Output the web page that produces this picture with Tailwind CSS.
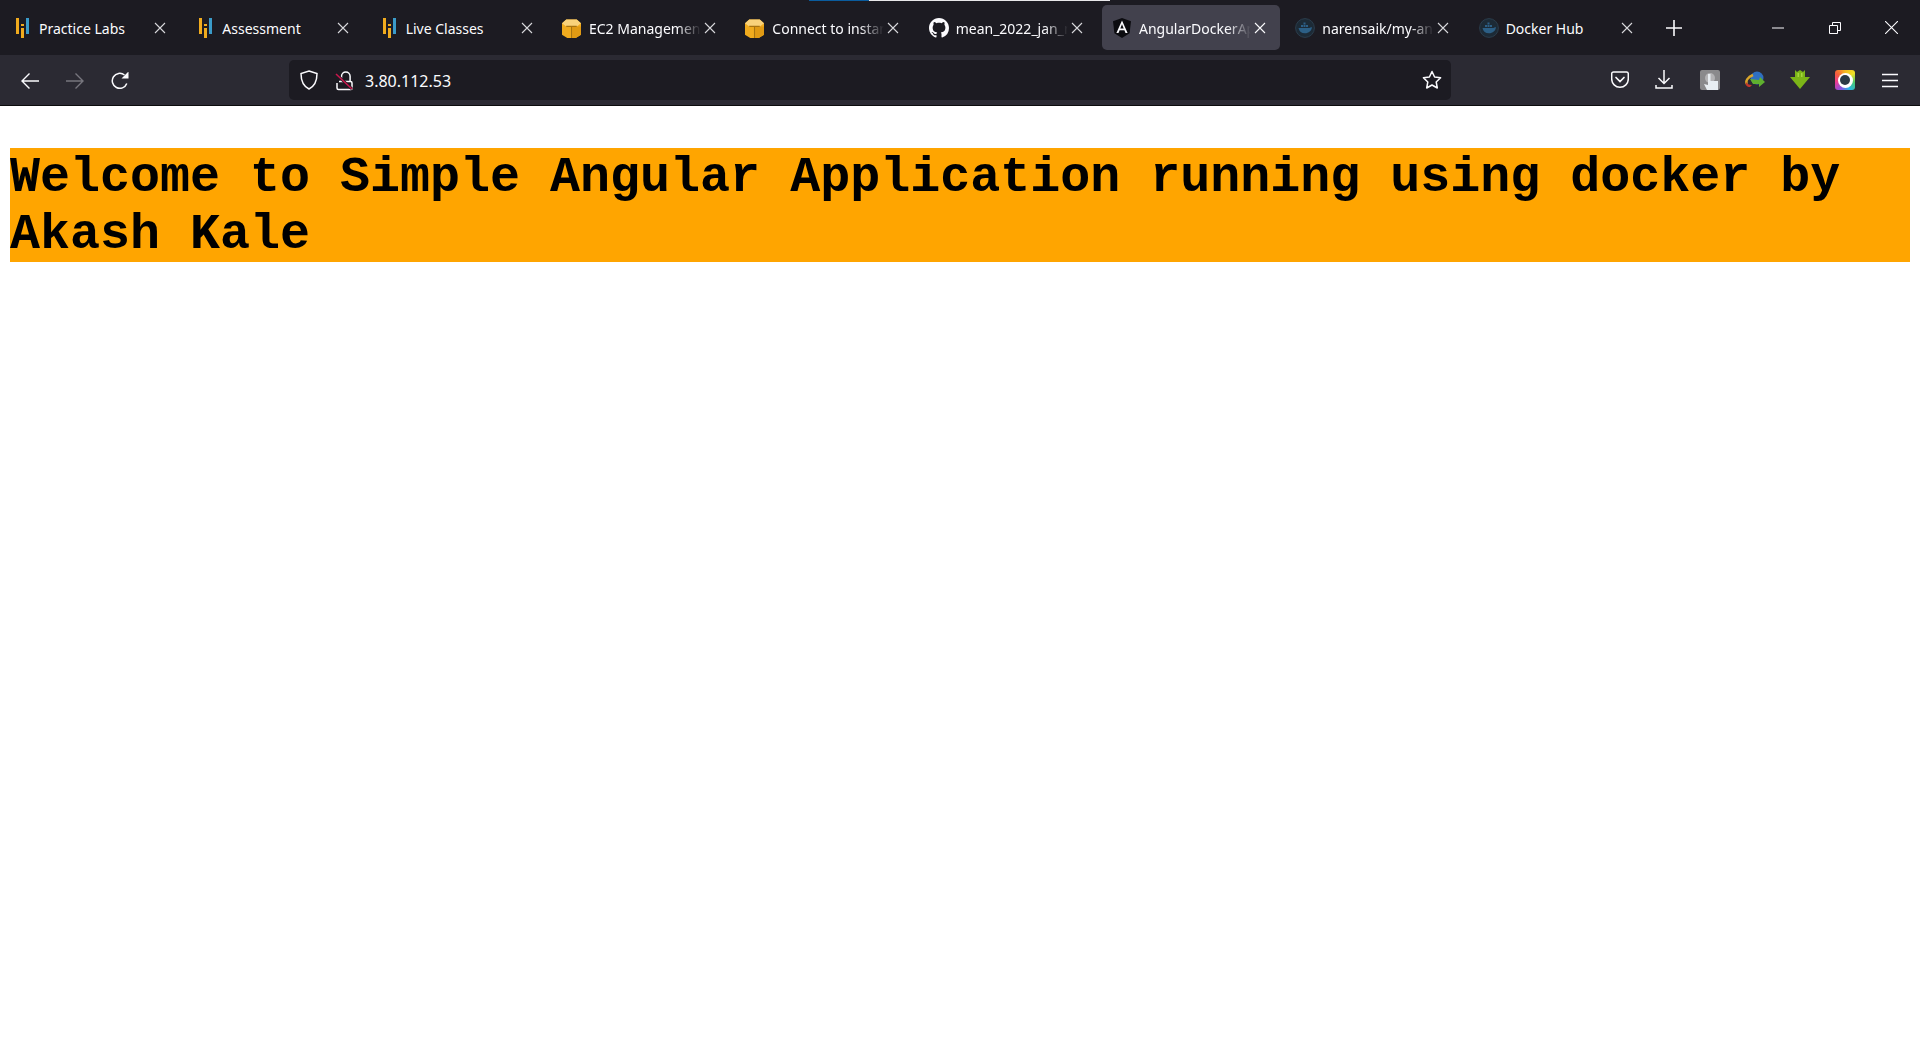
<!DOCTYPE html>
<html lang="en">
<head>
  <meta charset="UTF-8" />
  <title>AngularDockerApp</title>
  <script src="https://cdn.jsdelivr.net/npm/@tailwindcss/browser@4"></script>
</head>
<body class="bg-white font-['Noto_Sans',sans-serif]">
  <!-- Tab strip -->
  <div class="relative flex h-[55px] items-center bg-[#1c1b22] pl-[2px] text-[14px] text-[#fbfbfe]">
    <div class="absolute left-[809px] top-0 h-[1px] w-[60px] bg-[#0a5c9e]"></div>
    <div class="absolute left-[869px] top-0 h-[1px] w-[241px] bg-[#e8e8ea]"></div>

    <div class="mr-[5.33px] flex h-[45px] w-[178px] shrink-0 items-center rounded">
      <svg class="ml-[14px] mt-[1px] h-[20px] w-[13px]" viewBox="0 0 13 20"><path fill="#f0ab1e" d="M0 0h3v16H0zM5 6h3v2H5zM5 10h3v10H5z"/><path fill="#3a9bc9" d="M10 0h3v16h-3z"/></svg>
      <span class="ml-[10px] mt-[2px] w-[112px] truncate">Practice Labs</span>
      <svg class="ml-[3px] h-[12px] w-[12px]" viewBox="0 0 12 12"><path stroke="#d8d8dc" stroke-width="1.1" d="M1 1l10 10M11 1L1 11"/></svg>
    </div>
    <div class="mr-[5.33px] flex h-[45px] w-[178px] shrink-0 items-center rounded">
      <svg class="ml-[14px] mt-[1px] h-[20px] w-[13px]" viewBox="0 0 13 20"><path fill="#f0ab1e" d="M0 0h3v16H0zM5 6h3v2H5zM5 10h3v10H5z"/><path fill="#3a9bc9" d="M10 0h3v16h-3z"/></svg>
      <span class="ml-[10px] mt-[2px] w-[112px] truncate">Assessment</span>
      <svg class="ml-[3px] h-[12px] w-[12px]" viewBox="0 0 12 12"><path stroke="#d8d8dc" stroke-width="1.1" d="M1 1l10 10M11 1L1 11"/></svg>
    </div>
    <div class="mr-[5.33px] flex h-[45px] w-[178px] shrink-0 items-center rounded">
      <svg class="ml-[14px] mt-[1px] h-[20px] w-[13px]" viewBox="0 0 13 20"><path fill="#f0ab1e" d="M0 0h3v16H0zM5 6h3v2H5zM5 10h3v10H5z"/><path fill="#3a9bc9" d="M10 0h3v16h-3z"/></svg>
      <span class="ml-[10px] mt-[2px] w-[112px] truncate">Live Classes</span>
      <svg class="ml-[3px] h-[12px] w-[12px]" viewBox="0 0 12 12"><path stroke="#d8d8dc" stroke-width="1.1" d="M1 1l10 10M11 1L1 11"/></svg>
    </div>
    <div class="mr-[5.33px] flex h-[45px] w-[178px] shrink-0 items-center rounded">
      <svg class="ml-[10px] mt-[1px] h-[19px] w-[19px]" viewBox="0 0 18 18"><path fill="#f0ab1e" d="M0 4l4-3.500h10L18 4v11l-5 3H5l-5-3z"/><path fill="#e09a14" d="M9 7h9v8l-5 3H9z"/><path fill="#f9d27a" d="M0 4l4-3.500h10L18 4l-4 3H4z"/><path fill="#a87410" d="M8.500 7h1v11h-1zM4 6.500h10v1H4z"/></svg>
      <span class="ml-[8px] mt-[2px] w-[112px] overflow-hidden whitespace-nowrap [mask-image:linear-gradient(to_left,transparent,black_24px)]">EC2 Management</span>
      <svg class="ml-[3px] h-[12px] w-[12px]" viewBox="0 0 12 12"><path stroke="#d8d8dc" stroke-width="1.1" d="M1 1l10 10M11 1L1 11"/></svg>
    </div>
    <div class="mr-[5.33px] flex h-[45px] w-[178px] shrink-0 items-center rounded">
      <svg class="ml-[10px] mt-[1px] h-[19px] w-[19px]" viewBox="0 0 18 18"><path fill="#f0ab1e" d="M0 4l4-3.500h10L18 4v11l-5 3H5l-5-3z"/><path fill="#e09a14" d="M9 7h9v8l-5 3H9z"/><path fill="#f9d27a" d="M0 4l4-3.500h10L18 4l-4 3H4z"/><path fill="#a87410" d="M8.500 7h1v11h-1zM4 6.500h10v1H4z"/></svg>
      <span class="ml-[8px] mt-[2px] w-[112px] overflow-hidden whitespace-nowrap [mask-image:linear-gradient(to_left,transparent,black_24px)]">Connect to instance</span>
      <svg class="ml-[3px] h-[12px] w-[12px]" viewBox="0 0 12 12"><path stroke="#d8d8dc" stroke-width="1.1" d="M1 1l10 10M11 1L1 11"/></svg>
    </div>
    <div class="mr-[5.33px] flex h-[45px] w-[178px] shrink-0 items-center rounded">
      <svg class="ml-[10px] mt-[1px] h-[20px] w-[20px]" viewBox="0 0 16 16"><path fill="#fbfbfe" d="M8 0C3.58 0 0 3.58 0 8c0 3.54 2.29 6.53 5.47 7.59.4.07.55-.17.55-.38 0-.19-.01-.82-.01-1.49-2.01.37-2.53-.49-2.69-.94-.09-.23-.48-.94-.82-1.13-.28-.15-.68-.52-.01-.53.63-.01 1.08.58 1.23.82.72 1.21 1.87.87 2.33.66.07-.52.28-.87.51-1.07-1.78-.2-3.64-.89-3.64-3.95 0-.87.31-1.59.82-2.15-.08-.2-.36-1.02.08-2.12 0 0 .67-.21 2.2.82.64-.18 1.32-.27 2-.27s1.36.09 2 .27c1.53-1.04 2.2-.82 2.2-.82.44 1.1.16 1.92.08 2.12.51.56.82 1.27.82 2.15 0 3.07-1.87 3.75-3.65 3.95.29.25.54.73.54 1.48 0 1.07-.01 1.93-.01 2.2 0 .21.15.46.55.38A8.01 8.01 0 0 0 16 8c0-4.42-3.58-8-8-8z"/></svg>
      <span class="ml-[7px] mt-[2px] w-[112px] overflow-hidden whitespace-nowrap [mask-image:linear-gradient(to_left,transparent,black_24px)]">mean_2022_jan_nodejs</span>
      <svg class="ml-[3px] h-[12px] w-[12px]" viewBox="0 0 12 12"><path stroke="#d8d8dc" stroke-width="1.1" d="M1 1l10 10M11 1L1 11"/></svg>
    </div>
    <div class="mr-[5.33px] flex h-[45px] w-[178px] shrink-0 items-center rounded-[5px] bg-[#42414d]">
      <svg class="ml-[10px] mt-[1px] h-[20px] w-[20px]" viewBox="0 0 20 20"><path fill="#0c0c10" d="M10 0l9 3.200-1.400 12L10 20l-7.600-4.800L1 3.200z"/><path fill="#fbfbfe" d="M10 2.400L4.400 15h2.100l1.100-2.800h4.800l1.100 2.800h2.100zM8.300 10.400L10 6.200l1.700 4.200z"/></svg>
      <span class="ml-[7px] mt-[2px] w-[112px] overflow-hidden whitespace-nowrap [mask-image:linear-gradient(to_left,transparent,black_24px)]">AngularDockerApp</span>
      <svg class="ml-[3px] h-[12px] w-[12px]" viewBox="0 0 12 12"><path stroke="#fbfbfe" stroke-width="1.1" d="M1 1l10 10M11 1L1 11"/></svg>
    </div>
    <div class="mr-[5.33px] flex h-[45px] w-[178px] shrink-0 items-center rounded">
      <svg class="ml-[10px] mt-[1px] h-[20px] w-[20px]" viewBox="0 0 20 20"><circle cx="10" cy="10" r="9.400" fill="#1c2a36" stroke="#2b3d4c" stroke-width="1"/><path fill="#2c5f86" d="M3.500 10h11c.8-.9 1.800-1 2.500-.7-.5 3.600-3.200 6-7 6-3.600 0-5.800-2-6.500-5.300zM6 7h2v2H6zM8.500 7h2v2h-2zM11 7h2v2h-2zM8.500 4.500h2v2h-2z"/></svg>
      <span class="ml-[7px] mt-[2px] w-[112px] overflow-hidden whitespace-nowrap [mask-image:linear-gradient(to_left,transparent,black_24px)]">narensaik/my-angular</span>
      <svg class="ml-[3px] h-[12px] w-[12px]" viewBox="0 0 12 12"><path stroke="#d8d8dc" stroke-width="1.1" d="M1 1l10 10M11 1L1 11"/></svg>
    </div>
    <div class="mr-[5.33px] flex h-[45px] w-[178px] shrink-0 items-center rounded">
      <svg class="ml-[10px] mt-[1px] h-[20px] w-[20px]" viewBox="0 0 20 20"><circle cx="10" cy="10" r="9.400" fill="#1c2a36" stroke="#2b3d4c" stroke-width="1"/><path fill="#2c5f86" d="M3.500 10h11c.8-.9 1.800-1 2.500-.7-.5 3.600-3.200 6-7 6-3.600 0-5.800-2-6.500-5.300zM6 7h2v2H6zM8.500 7h2v2h-2zM11 7h2v2h-2zM8.500 4.500h2v2h-2z"/></svg>
      <span class="ml-[7px] mt-[2px] w-[112px] truncate">Docker Hub</span>
      <svg class="ml-[3px] h-[12px] w-[12px]" viewBox="0 0 12 12"><path stroke="#d8d8dc" stroke-width="1.1" d="M1 1l10 10M11 1L1 11"/></svg>
    </div>

    <svg class="ml-[14px] h-[16px] w-[16px]" viewBox="0 0 16 16"><path stroke="#fbfbfe" stroke-width="1.600" d="M8 0v16M0 8h16"/></svg>

    <div class="ml-auto flex items-center">
      <div class="flex w-[59px] justify-center"><svg class="h-[12px] w-[12px]" viewBox="0 0 12 12"><path stroke="#fbfbfe" d="M0 6h12"/></svg></div>
      <div class="flex w-[55px] justify-center"><svg class="h-[12px] w-[12px]" viewBox="0 0 12 12"><path fill="none" stroke="#fbfbfe" d="M.5 3.500h8v8h-8zM3.500 3.500v-3h8v8h-3"/></svg></div>
      <div class="flex w-[58px] justify-center"><svg class="h-[13px] w-[13px]" viewBox="0 0 13 13"><path stroke="#fbfbfe" stroke-width="1.100" d="M0 0l13 13M13 0L0 13"/></svg></div>
    </div>
  </div>

  <!-- Nav bar -->
  <div class="flex h-[51px] items-center border-b border-[#0c0c0d] bg-[#2b2a33] text-[#fbfbfe]">
    <svg class="ml-[21px] mt-[2px] h-[18px] w-[18px]" viewBox="0 0 18 18"><path fill="none" stroke="#fbfbfe" stroke-width="1.400" d="M18 9H1M8.500 1.500L1 9l7.500 7.500"/></svg>
    <svg class="ml-[27px] mt-[2px] h-[18px] w-[18px]" viewBox="0 0 18 18"><path fill="none" stroke="#77767e" stroke-width="1.400" d="M0 9h17M9.500 1.500L17 9l-7.500 7.500"/></svg>
    <svg class="ml-[27px] mt-[2px] h-[18px] w-[18px]" viewBox="0 0 18 18"><path fill="none" stroke="#fbfbfe" stroke-width="1.500" d="M15.800 11.500A7.500 7.500 0 1 1 13.500 3"/><path fill="#fbfbfe" d="M10.500 6.500h7v-7z"/></svg>

    <!-- URL bar -->
    <div class="ml-[160px] flex h-[40px] w-[1162px] items-center rounded-[5px] bg-[#1c1b22]">
      <svg class="ml-[11px] h-[20px] w-[18px]" viewBox="0 0 18 20"><path fill="none" stroke="#fbfbfe" stroke-width="1.500" d="M9 1l8 2.500c0 7-2 12.500-8 15.500C3 16 1 10.500 1 3.500z"/></svg>
      <svg class="ml-[17px] mt-[2px] h-[20px] w-[18px]" viewBox="0 0 18 20"><path fill="none" stroke="#fbfbfe" stroke-width="1.500" d="M6.500 10V5.200a4.300 4.300 0 0 1 8.600 0V10M4 10.500h11.500a1.500 1.500 0 0 1 1.500 1.500v5.500a1 1 0 0 1-1 1H3.500a1.500 1.500 0 0 1-1.500-1.500v-5"/><path stroke="#1c1b22" stroke-width="3" d="M1 3l16 15"/><path stroke="#c8174c" stroke-width="1.600" d="M1 3l16 15"/></svg>
      <span class="ml-[12px] mt-[2px] text-[16px]">3.80.112.53</span>
      <svg class="ml-auto mr-[9px] h-[20px] w-[20px]" viewBox="0 0 20 20"><path fill="none" stroke="#fbfbfe" stroke-width="1.500" stroke-linejoin="round" d="M10 1.500l2.600 5.500 6 .8-4.400 4.200 1.100 6L10 15l-5.300 3 1.100-6L1.400 7.800l6-.8z"/></svg>
    </div>

    <!-- Toolbar icons -->
    <svg class="ml-[160px] h-[18px] w-[18px]" viewBox="0 0 18 18"><path fill="none" stroke="#fbfbfe" stroke-width="1.500" d="M2.500 1h13A1.800 1.800 0 0 1 17.300 2.800V8a8.300 8.300 0 0 1-16.600 0V2.800A1.800 1.800 0 0 1 2.500 1z"/><path fill="none" stroke="#fbfbfe" stroke-width="1.700" stroke-linecap="round" d="M5 6.500l4 4 4-4"/></svg>
    <svg class="ml-[26px] h-[20px] w-[18px]" viewBox="0 0 18 20"><path fill="none" stroke="#fbfbfe" stroke-width="1.500" d="M9 0v13M3.500 8L9 13.500 14.500 8M1 15v3h16v-3"/></svg>
    <div class="relative ml-[27px] h-[20px] w-[20px] overflow-hidden rounded-[2px] bg-[#8a8a8c]">
      <div class="absolute left-[5px] top-[3px] h-[10px] w-[10px] rounded-full bg-[#b4b4b6]"></div>
      <svg class="absolute bottom-0 left-[4px] h-[16px] w-[14px]" viewBox="0 0 14 16"><path fill="#e8eef2" d="M4 0h2.500v7H14v9H3L0 10l4 1z"/></svg>
    </div>
    <svg class="ml-[25px] h-[20px] w-[20px]" viewBox="0 0 20 20"><circle cx="12" cy="8" r="6.500" fill="#2f6fc0"/><path fill="none" stroke="#d9a52a" stroke-width="2.500" d="M8 5C3 7 0 11 2 14"/><path fill="#c5362c" d="M1 12c1 2 3 3 6 3l-2 2c-3 0-5-2-4-5z"/><path fill="#5fb02f" d="M5 9l9 1 1-3 5 5-6 5 0-3-6 0z"/></svg>
    <svg class="ml-[25px] h-[20px] w-[20px]" viewBox="0 0 20 20"><path fill="#7cb518" d="M5 0l2 2 3-2 3 2 2-2v7h5L10 19 0 7h5z"/><path fill="#a5d63c" d="M7.500 3h1.500v4H7.500zM11 3h1.500v4H11z"/></svg>
    <div class="ml-[25px] flex h-[20px] w-[20px] items-center justify-center rounded-[3px] bg-[conic-gradient(#f5b81f,#f0e025,#4cc96a,#27b6e8,#8a52e0,#ee3a92,#f5603a,#f5b81f)]">
      <div class="flex h-[15px] w-[15px] items-center justify-center rounded-full bg-white"><div class="h-[10px] w-[10px] rounded-full bg-[#2b3a46]"></div></div>
    </div>
    <svg class="ml-[27px] h-[15px] w-[16px]" viewBox="0 0 16 15"><path stroke="#fbfbfe" stroke-width="1.500" d="M0 1.500h16M0 7.500h16M0 13.500h16"/></svg>
  </div>

  <h1 class="mx-[10px] mt-[42px] h-[114px] bg-[#ffa500] pt-[1px] font-['Liberation_Mono',monospace] text-[50px]/[57px] font-bold text-black">Welcome to Simple Angular Application running using docker by Akash Kale</h1>
</body>
</html>
